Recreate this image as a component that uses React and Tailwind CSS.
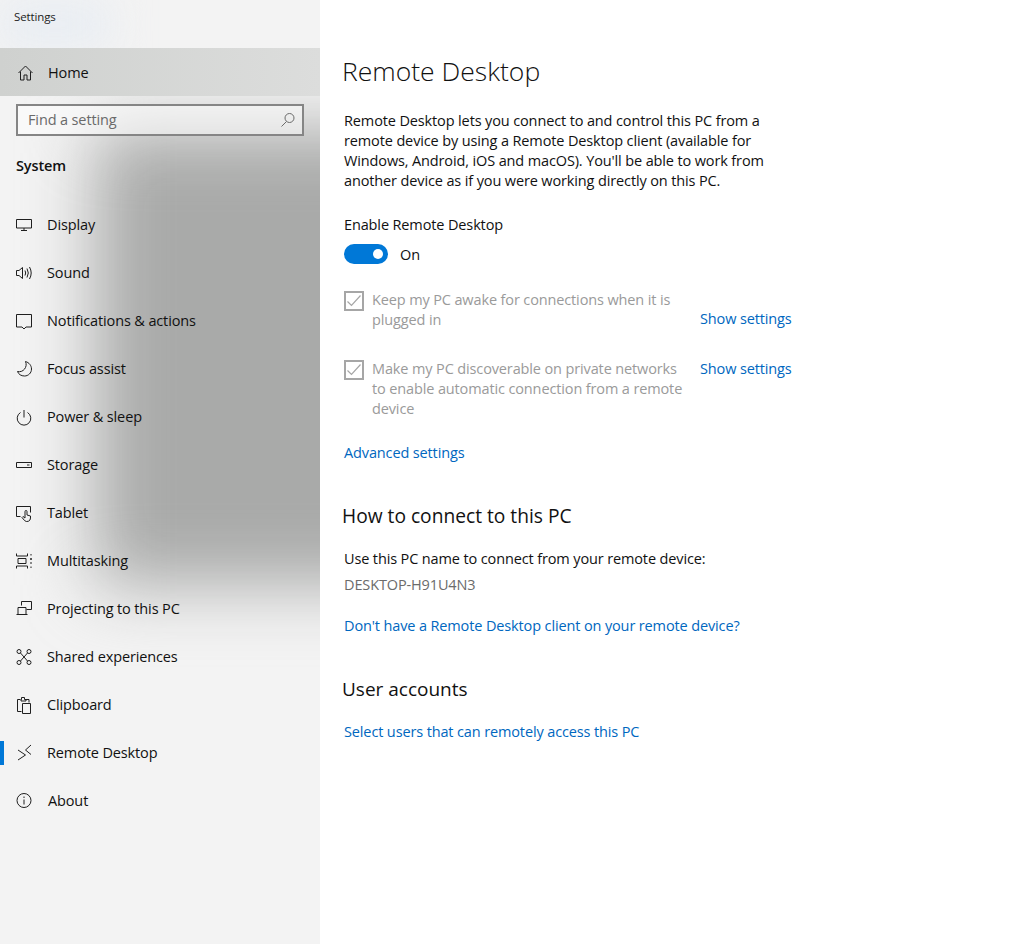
import React from 'react';

const Ico = ({ children }) => (
  <svg width="18" height="18" viewBox="0 0 18 18" fill="none" stroke="#1f1f1f" strokeWidth="1" className="shrink-0">
    {children}
  </svg>
);

const icons = {
  display: <Ico><path d="M.5 3.500h15v8.500H.5zM8 12v2.500M5 14.500h6" /></Ico>,
  sound: <Ico><path d="M.5 6.500h2.500L6.500 3.500v11L3 11.500H.5zM9 6.500q1.400 2.500 0 5M11 4.500q2.600 4.500 0 9M13.500 3q3.400 6 0 12" /></Ico>,
  notifications: <Ico><path d="M.5 2.500h15v12.500h-5.500L8 17l-2-2H.5z" /></Ico>,
  focus: <Ico><path d="M9.500 1.500c3.500 1 6 4 6 7.500 0 4-3.200 7-7 7-3.300 0-6-1.700-7-4.500 5.500 1.500 10.500-4.500 8-10z" /></Ico>,
  power: <Ico><path d="M8 2v7.500M4.500 4.500a6.800 6.800 0 1 0 7 0" /></Ico>,
  storage: <Ico><path d="M.5 6.500h15v5H.5zM11 9h2.500" /></Ico>,
  tablet: <Ico><path d="M4.500 12.500h-4v-10h14v6M8.500 16.500l-2.500-3 1-1 2 1.500V7.500a1 1 0 0 1 2 0V11l3.500 1v2a3.500 3.500 0 0 1-6 2.500z" /></Ico>,
  multitask: <Ico><path d="M.5 1.500v2.500h11V1.500M.5 16.500V14h11v2.500M2 6.500h8v5H2zM15 2v1.500M15 14.500V16M15 10v2" /><circle cx="15" cy="7" r="1" fill="#1f1f1f" stroke="none" /></Ico>,
  project: <Ico><path d="M5.500 5.500v-4h10v8h-5M.5 14.500h11M2 14V7.500h8V14" /></Ico>,
  shared: <Ico><circle cx="3" cy="3.500" r="2" /><circle cx="13" cy="3.500" r="2" /><circle cx="3" cy="14.500" r="2" /><circle cx="13" cy="14.500" r="2" /><path d="M4.500 5l7 8M11.500 5l-7 8" /></Ico>,
  clipboard: <Ico><path d="M5.500 15.500h-4v-12h3M10 3.500h3v3M5.500 3.500V1.500h3v2h1.500v1.500h-5V3.500zM6.500 7.500h8v10h-8z" /></Ico>,
  remote: <Ico><path d="M2 6l7.500 5L2 16M15 1L9.500 6l5.500 4.500" /></Ico>,
  about: <Ico><circle cx="8" cy="8.500" r="7" /><path d="M8 7.500v5M8 4.500v1.500" /></Ico>,
};

const navItems = [
  ['Display', 'display'],
  ['Sound', 'sound'],
  ['Notifications & actions', 'notifications'],
  ['Focus assist', 'focus'],
  ['Power & sleep', 'power'],
  ['Storage', 'storage'],
  ['Tablet', 'tablet'],
  ['Multitasking', 'multitask'],
  ['Projecting to this PC', 'project'],
  ['Shared experiences', 'shared'],
  ['Clipboard', 'clipboard'],
  ['Remote Desktop', 'remote'],
  ['About', 'about'],
];

const Check = () => (
  <div className="w-5 h-5 border-2 border-[#a6a6a6] shrink-0 mt-px">
    <svg width="16" height="16" viewBox="0 0 16 16" fill="none" stroke="#a6a6a6" strokeWidth="1.200">
      <path d="M1.500 8.500l4 4 9-10" />
    </svg>
  </div>
);

const Link = ({ children, className = '' }) => (
  <a className={`block text-[#0067c0] leading-5 ${className}`}>{children}</a>
);

export default function App() {
  return (
    <div className="flex min-h-[944px] bg-white text-[#111] text-[14.5px] font-['Open_Sans','Noto_Sans',sans-serif] tracking-[-0.13px]">
      {/* Sidebar */}
      <aside className="relative w-[320px] h-[944px] shrink-0 overflow-hidden bg-[#f3f3f3]">
        {/* acrylic blotch behind the sidebar */}
        <div className="absolute left-[95px] top-[130px] w-[320px] h-[455px] bg-[#a9aaa9] blur-[34px]" />
        <div className="absolute left-0 top-0 w-[110px] h-[48px] bg-[#e8edf3] blur-[20px]" />

        <div className="relative">
          <div className="h-12 pl-[14px] pt-[9px] text-[11.500px] leading-4 text-[#222]">Settings</div>
          <div className="h-12 flex items-center pl-[17px] pt-px gap-[13px] bg-gradient-to-r from-[#cfd1cf] to-[#dcdddc] text-[#111]">
            <svg width="18" height="18" viewBox="0 0 18 18" fill="none" stroke="#1f1f1f" strokeWidth="1">
              <path d="M1.500 9L8.500 2l7 7M3.500 7.500v8.500h3.500v-5h3v5h3.500V7.500" />
            </svg>
            <span>Home</span>
          </div>
          <div className="mx-4 mt-2 h-8 flex items-center justify-between border-2 border-[#858585] bg-white/50 pl-[10px] pr-[6px] text-[#6a6a6a]">
            <span>Find a setting</span>
            <svg width="16" height="16" viewBox="0 0 16 16" fill="none" stroke="#6a6a6a" strokeWidth="1">
              <circle cx="9.500" cy="6" r="4.500" />
              <path d="M6.500 9.500L1.500 14.500" />
            </svg>
          </div>
          <div className="h-[65px] pl-4 pt-5 font-semibold leading-5">System</div>
          <nav>
            {navItems.map(([label, icon]) => (
              <div key={label} className="relative h-12 flex items-center pl-4 gap-[13px]">
                {label === 'Remote Desktop' && <div className="absolute left-0 top-3 w-1 h-6 bg-[#0078d7]" />}
                {icons[icon]}
                <span className={label === 'About' ? 'ml-px' : ''}>{label}</span>
              </div>
            ))}
          </nav>
        </div>
      </aside>

      {/* Content */}
      <main className="pl-6 pt-[49px] w-[480px]">
        <h1 className="-ml-[2px] text-[26.500px] leading-[44px] font-light tracking-normal">Remote Desktop</h1>
        <p className="mt-[18px] leading-5 w-[440px]">
          Remote Desktop lets you connect to and control this PC from a remote device by using a Remote Desktop client (available for Windows, Android, iOS and macOS). You'll be able to work from another device as if you were working directly on this PC.
        </p>
        <div className="mt-[24px] leading-5">Enable Remote Desktop</div>
        <div className="mt-[9px] flex items-center gap-3 h-5">
          <div className="w-11 h-5 rounded-full bg-[#0078d7] flex items-center justify-end pr-[5px]">
            <div className="w-[10px] h-[10px] rounded-full bg-white" />
          </div>
          <span className="pt-px">On</span>
        </div>
        <div className="mt-[26px] flex text-[#9a9a9a] leading-5">
          <Check />
          <div className="ml-2 w-[328px] pr-[12px]">Keep my PC awake for connections when it is plugged in</div>
          <Link className="self-end -translate-y-px">Show settings</Link>
        </div>
        <div className="mt-[29px] flex items-start text-[#9a9a9a] leading-5">
          <Check />
          <div className="ml-2 w-[328px] pr-[12px]">Make my PC discoverable on private networks to enable automatic connection from a remote device</div>
          <Link>Show settings</Link>
        </div>
        <Link className="mt-[24px]">Advanced settings</Link>
        <h2 className="-ml-[2px] mt-[39px] text-[19.200px] leading-7 tracking-normal">How to connect to this PC</h2>
        <div className="mt-[19px] leading-5">Use this PC name to connect from your remote device:</div>
        <div className="mt-[6px] leading-5 text-[#6b6b6b]">DESKTOP-H91U4N3</div>
        <Link className="mt-[21px]">Don't have a Remote Desktop client on your remote device?</Link>
        <h2 className="-ml-[2px] mt-[39px] text-[19px] leading-7 tracking-normal">User accounts</h2>
        <Link className="mt-[19px]">Select users that can remotely access this PC</Link>
      </main>
    </div>
  );
}
